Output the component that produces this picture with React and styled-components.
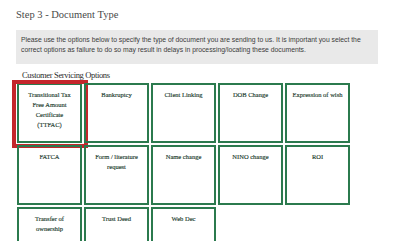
import styled, { createGlobalStyle } from "styled-components";

const GlobalStyle = createGlobalStyle`
  body {
    margin: 0;
    background: #fff;
  }
`;

const options = [
  "Transitional Tax Free Amount Certificate (TTFAC)",
  "Bankruptcy",
  "Client Linking",
  "DOB Change",
  "Expression of wish",
  "FATCA",
  "Form / literature request",
  "Name change",
  "NINO change",
  "ROI",
  "Transfer of ownership",
  "Trust Deed",
  "Web Dec",
];

const App = () => {
  return (
    <Page>
      <GlobalStyle />
      <Title>Step 3 - Document Type</Title>
      <Notice>
        <span>
          Please use the options below to specify the type of document you are sending to us. It is important you select the
        </span>
        <span>correct options as failure to do so may result in delays in processing/locating these documents.</span>
      </Notice>
      <SectionLabel>Customer Servicing Options</SectionLabel>
      <Grid>
        {options.map((label, i) => (
          <Tile key={label} $selected={i === 0}>
            {label}
          </Tile>
        ))}
      </Grid>
    </Page>
  );
};

const Page = styled.div`
  padding: 8px 18px 0 16px;
  width: 362px;
  height: 233px;
  overflow: hidden;
`;

const Title = styled.h2`
  margin: 0;
  font-family: "Liberation Serif", "DejaVu Serif", serif;
  font-weight: normal;
  font-size: 10.5px;
  line-height: 14px;
  color: #4a4a4a;
`;

const Notice = styled.div`
  margin-top: 8px;
  background: #e9e9e9;
  padding: 5px 5px 9px 5px;
  display: flex;
  flex-direction: column;
  font-family: "Liberation Sans", Arial, sans-serif;
  font-size: 6.8px;
  line-height: 10px;
  color: #3c3c3c;
  white-space: nowrap;
`;

const SectionLabel = styled.div`
  margin: 6px 0 0 6px;
  font-family: "Liberation Serif", "DejaVu Serif", serif;
  font-size: 8.5px;
  line-height: 10px;
  letter-spacing: -0.35px;
  color: #2b2b2b;
`;

const Grid = styled.div`
  margin: 3px 0 0 1px;
  display: grid;
  grid-template-columns: repeat(5, 65px);
  grid-auto-rows: 60px;
  gap: 2px;
`;

const Tile = styled.div`
  position: relative;
  box-sizing: border-box;
  border: 2px solid #2b7a4e;
  padding: 5px 5px 0;
  text-align: center;
  font-family: "Liberation Serif", "DejaVu Serif", serif;
  font-size: 6.5px;
  line-height: 10px;
  color: #24402f;
  -webkit-text-stroke: 0.15px #24402f;

  &::after {
    content: "";
    display: ${(p) => (p.$selected ? "block" : "none")};
    position: absolute;
    left: -7px;
    right: -8px;
    top: -5px;
    bottom: -7px;
    border: 4px solid #c4262b;
  }
`;

export default App;
